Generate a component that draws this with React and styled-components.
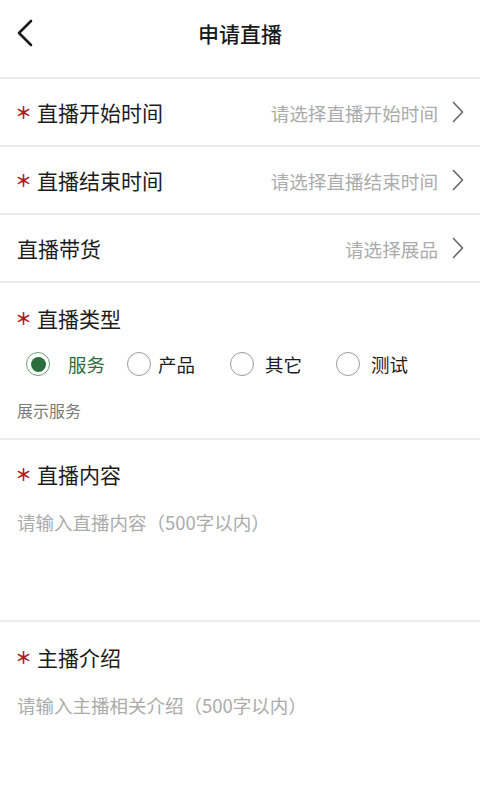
import React, { useState } from 'react';
import styled, { createGlobalStyle } from 'styled-components';

const GlobalStyle = createGlobalStyle`
  html, body {
    margin: 0;
    padding: 0;
    background: #ffffff;
  }
  body {
    font-family: "Noto Sans CJK SC", "Noto Sans", sans-serif;
    color: #222;
  }
  * {
    box-sizing: border-box;
  }
`;

const Page = styled.div`
  width: 480px;
  min-height: 800px;
  background: #fff;
`;

const Header = styled.header`
  height: 79px;
  display: grid;
  grid-template-columns: 60px 1fr 60px;
  align-items: center;
  border-bottom: 2px solid #ececec;
  padding-bottom: 12px;
`;

const BackButton = styled.button`
  background: none;
  border: none;
  padding: 0 0 0 16px;
  height: 40px;
  display: flex;
  align-items: center;
  cursor: pointer;
`;

const Title = styled.h1`
  margin: 0;
  text-align: center;
  font-size: 21px;
  font-weight: 500;
  color: #1a1a1a;
`;

const SelectRow = styled.div`
  height: 68px;
  display: flex;
  align-items: center;
  justify-content: space-between;
  padding: 0 16px 0 17px;
  border-bottom: 2px solid #ececec;
  cursor: pointer;
`;

const Label = styled.div`
  display: flex;
  align-items: center;
  font-size: 21px;
  line-height: 30px;
  color: #1c1c1c;
`;

const Star = styled.span`
  display: inline-block;
  color: #b01c1c;
  font-size: 17px;
  font-weight: 700;
  width: 22px;
  margin-left: -2px;
  line-height: 30px;
`;

const Value = styled.div`
  display: flex;
  align-items: center;
  gap: 14px;
  font-size: 18.6px;
  color: #ababab;
`;

const Section = styled.section`
  padding: ${p => p.$pad || '20px 17px 17px'};
  border-bottom: ${p => (p.$last ? 'none' : '2px solid #ececec')};
  min-height: ${p => p.$minH || 'auto'};
`;

const RadioGroup = styled.div`
  display: flex;
  align-items: center;
  margin-top: 18px;
  padding-left: 9px;
`;

const RadioItem = styled.label`
  display: flex;
  align-items: center;
  width: ${p => p.$w}px;
  font-size: 18.5px;
  color: ${p => (p.$checked ? '#2c6e3c' : '#1c1c1c')};
  cursor: pointer;
`;

const RadioCircle = styled.span`
  width: 24px;
  height: 24px;
  border-radius: 50%;
  border: 1.5px solid ${p => (p.$checked ? '#6a9f78' : '#9a9a9a')};
  display: flex;
  align-items: center;
  justify-content: center;
  margin-right: ${p => p.$gap}px;
  flex-shrink: 0;

  &::after {
    content: '';
    width: 15px;
    height: 15px;
    border-radius: 50%;
    background: #2b6e3d;
    display: ${p => (p.$checked ? 'block' : 'none')};
  }
`;

const Hint = styled.div`
  margin-top: 22px;
  font-size: 16px;
  color: #7a7a7a;
  line-height: 22px;
`;

const TextArea = styled.textarea`
  display: block;
  width: 100%;
  margin-top: ${p => p.$mt}px;
  height: ${p => p.$h}px;
  border: none;
  outline: none;
  resize: none;
  padding: 0;
  font-family: "Noto Sans CJK SC", "Noto Sans", sans-serif;
  font-size: 18.5px;
  line-height: 26px;
  color: #333;
  background: transparent;

  &::placeholder {
    color: #ababab;
  }
`;

const Chevron = () => (
  <svg width="12" height="22" viewBox="0 0 12 22" fill="none">
    <path d="M1.5 1.5 L10.5 11 L1.5 20.5" stroke="#666" strokeWidth="1.6" strokeLinecap="round" strokeLinejoin="round" />
  </svg>
);

const BackIcon = () => (
  <svg width="18" height="28" viewBox="0 0 18 28" fill="none">
    <path d="M15 2 L3 14 L15 26" stroke="#1a1a1a" strokeWidth="2.6" strokeLinecap="round" strokeLinejoin="round" />
  </svg>
);

const types = [
  { key: 'service', label: '服务', w: 101, gap: 18 },
  { key: 'product', label: '产品', w: 103, gap: 7 },
  { key: 'other', label: '其它', w: 106, gap: 11 },
  { key: 'test', label: '测试', w: 80, gap: 11 },
];

const App = () => {
  const [type, setType] = useState('service');

  return (
    <Page>
      <GlobalStyle />
      <Header>
        <BackButton aria-label="返回">
          <BackIcon />
        </BackButton>
        <Title>申请直播</Title>
        <div />
      </Header>

      <SelectRow>
        <Label><Star>＊</Star>直播开始时间</Label>
        <Value>请选择直播开始时间<Chevron /></Value>
      </SelectRow>
      <SelectRow>
        <Label><Star>＊</Star>直播结束时间</Label>
        <Value>请选择直播结束时间<Chevron /></Value>
      </SelectRow>
      <SelectRow>
        <Label>直播带货</Label>
        <Value>请选择展品<Chevron /></Value>
      </SelectRow>

      <Section>
        <Label><Star>＊</Star>直播类型</Label>
        <RadioGroup>
          {types.map(t => (
            <RadioItem
              key={t.key}
              $w={t.w}
              $checked={type === t.key}
              onClick={() => setType(t.key)}
            >
              <RadioCircle $checked={type === t.key} $gap={t.gap} />
              {t.label}
            </RadioItem>
          ))}
        </RadioGroup>
        <Hint>展示服务</Hint>
      </Section>

      <Section $pad="19px 17px 0" $minH="182px">
        <Label><Star>＊</Star>直播内容</Label>
        <TextArea $mt={20} $h={100} placeholder="请输入直播内容（500字以内）" />
      </Section>

      <Section $pad="20px 17px 0" $last>
        <Label><Star>＊</Star>主播介绍</Label>
        <TextArea $mt={20} $h={100} placeholder="请输入主播相关介绍（500字以内）" />
      </Section>
    </Page>
  );
};

export default App;
